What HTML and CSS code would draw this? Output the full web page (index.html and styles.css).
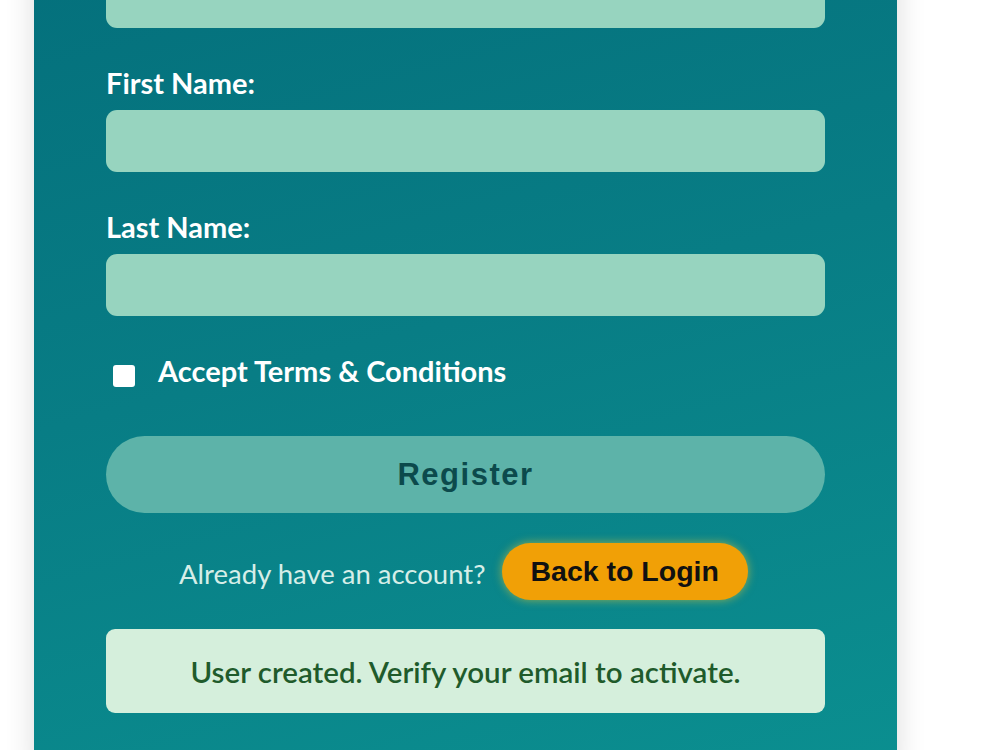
FILE: index.html
```html
<!DOCTYPE html>
<html lang="en">
<head>
<meta charset="utf-8">
<title>Register</title>
<link rel="stylesheet" href="styles.css">
</head>
<body>
<main class="page">
  <form class="card">
    <input class="field-input" id="email" type="email" aria-label="Email">

    <label class="field-label" for="first">First Name:</label>
    <input class="field-input" id="first" type="text">

    <label class="field-label" for="last">Last Name:</label>
    <input class="field-input" id="last" type="text">

    <label class="terms">
      <input class="terms-box" type="checkbox">
      <span>Accept Terms &amp; Conditions</span>
    </label>

    <button class="register-btn" type="button">Register</button>

    <div class="login-row">
      <span class="login-hint">Already have an account?</span>
      <a class="login-btn" href="#">Back to Login</a>
    </div>

    <div class="notice">User created. Verify your email to activate.</div>
  </form>
</main>
</body>
</html>
```

FILE: styles.css
```css
html, body {
  margin: 0;
  padding: 0;
  background: #ffffff;
}

body {
  font-family: Lato, "Open Sans", sans-serif;
  overflow: hidden;
}

.page {
  padding-left: 34px;
  width: 863px;
}

.card {
  display: flex;
  flex-direction: column;
  margin-top: -34px;
  padding: 0 72px 60px;
  background: linear-gradient(165deg, #04707c 0%, #087d85 45%, #0b8f90 100%);
  box-shadow: 0 0 28px rgba(0, 0, 0, 0.14);
}

.field-label {
  margin: 37px 0 9px;
  font-size: 29px;
  line-height: 36px;
  font-weight: 700;
  color: #ffffff;
}

.field-input {
  height: 62px;
  box-sizing: border-box;
  border: 0;
  border-radius: 11px;
  background: #97d4bf;
  outline: none;
}

.terms {
  display: flex;
  align-items: center;
  margin-top: 37px;
  font-size: 29px;
  line-height: 36px;
  font-weight: 700;
  color: #ffffff;
}

.terms-box {
  appearance: none;
  width: 22px;
  height: 22px;
  margin: 10px 23px 0 7px;
  border-radius: 3px;
  background: #ffffff;
}

.register-btn {
  margin-top: 47px;
  height: 77px;
  border: 0;
  border-radius: 39px;
  background: #5db3a9;
  color: #0c4a4c;
  font-family: "Liberation Sans", Arial, sans-serif;
  font-size: 31px;
  font-weight: 700;
  letter-spacing: 1.5px;
}

.login-row {
  display: flex;
  justify-content: center;
  align-items: center;
  gap: 16px;
  margin-top: 30px;
  padding-right: 4px;
}

.login-hint {
  font-size: 27.5px;
  color: #d6eee8;
  margin-top: 4px;
}

.login-btn {
  display: flex;
  align-items: center;
  height: 57px;
  padding: 0 29px;
  border-radius: 29px;
  background: #f1a006;
  box-shadow: 0 0 10px rgba(255, 205, 40, 0.55);
  color: #111111;
  font-family: "Liberation Sans", Arial, sans-serif;
  font-size: 28.5px;
  font-weight: 700;
  text-decoration: none;
}

.notice {
  display: flex;
  align-items: center;
  justify-content: center;
  margin-top: 29px;
  height: 84px;
  border-radius: 9px;
  background: #d5efdc;
  color: #1f5b2b;
  font-size: 29.5px;
  font-weight: 600;
}
```
